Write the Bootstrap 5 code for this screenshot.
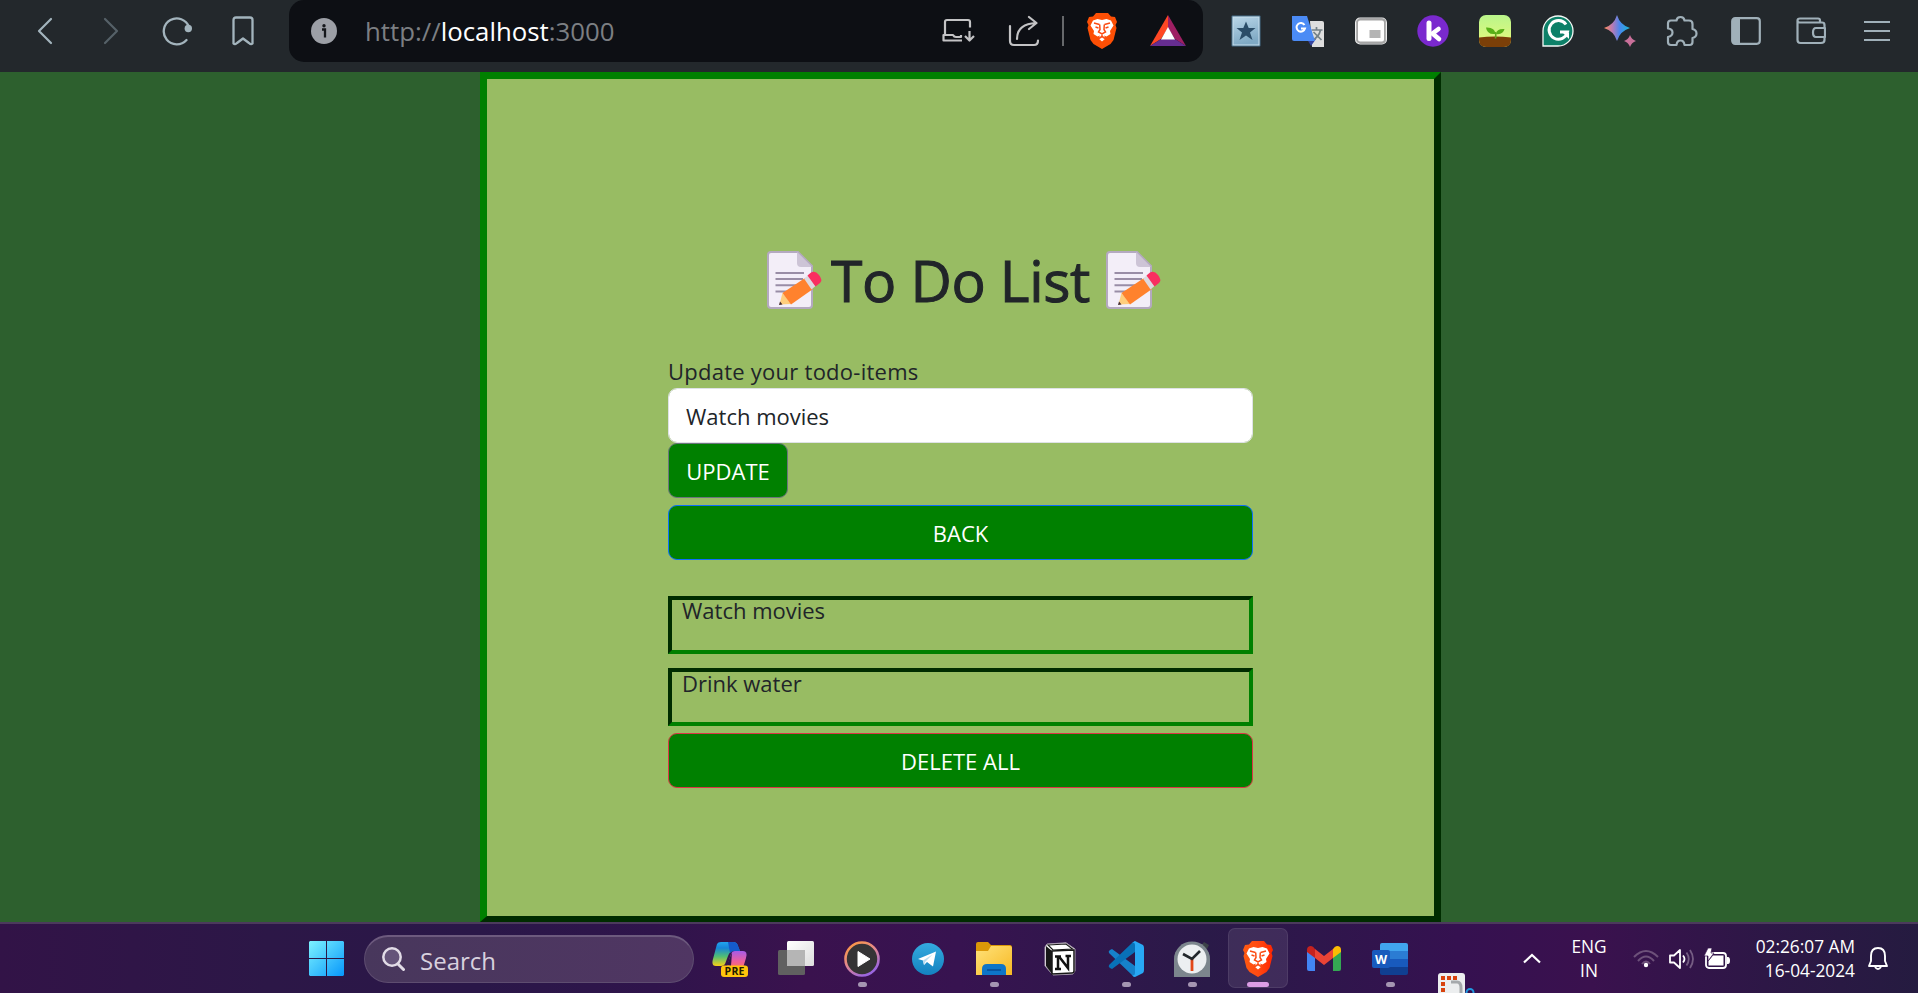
<!DOCTYPE html>
<html lang="en">
<head>
<meta charset="utf-8">
<title>To Do List</title>
<link href="https://cdn.jsdelivr.net/npm/bootstrap@5.3.0/dist/css/bootstrap.min.css" rel="stylesheet">
<script src="https://cdn.jsdelivr.net/npm/bootstrap@5.3.0/dist/js/bootstrap.bundle.min.js"></script>
<style>
  body { height: 993px; font-family: "Open Sans", "Noto Sans", sans-serif; font-size: 22px; background: #2d602e; color: #212529; }
  svg { display: block; flex: none; }
  .toolbar { height: 72px; background: #23282c; padding-left: 12px; padding-right: 8px; }
  .toolbar .slot { width: 66px; height: 62px; }
  .toolbar .ext { width: 62.3px; }
  .toolbar .tool { width: 65.3px; }
  .address { width: 914px; height: 62px; margin-left: 13px; margin-right: 12px; padding-left: 22px; padding-right: 2px; background: #0d0f14; border-radius: 15px; }
  .url { margin-left: 28px; font-size: 25.800px; color: #7c7f83; }
  .url b { color: #fff; font-weight: 400; }
  .rule { width: 2px; height: 30px; margin: 0 5px; background: #66686b; }
  .page { height: 850px; padding-left: 3px; }
  .todo { width: 961px; height: 850px; background: #98bc63; border: 7px outset green; border-bottom-width: 6px; }
  .todo-body { width: 585px; padding-top: 172px; }
  .title { height: 58px; margin: 0 0 44px 8px; font-size: 57px; font-weight: 500; line-height: 58px; white-space: nowrap; }
  .title-text { padding: 0 16px 0 8px; letter-spacing: -.35px; -webkit-text-stroke: 1px #212529; }
  .label-line { line-height: 36px; height: 35px; letter-spacing: .25px; }
  .todo .form-control, .todo .btn { font-size: 22px; height: 55px; border-radius: 9px; padding: 1px 17px 0; line-height: 53px; }
  .todo .btn { background: green; color: #fff; }
  .todo .update { width: 120px; padding-left: 0; padding-right: 0; }
  .back { margin-top: 7px; margin-bottom: 36px; }
  .entry { height: 58px; border: 4px inset green; padding-left: 10px; line-height: 21px; }
  .entry.second { margin-top: 14px; line-height: 23px; }
  .delete { margin-top: 7px; }
  .taskbar { height: 71px; border-top: 2px solid #4b3a5c; color: #f4f0f7;
    background: linear-gradient(90deg,#321347 0,#2c1747 14%,#2a1748 25%,#2f144b 34%,#3a124e 42%,#371350 50%,#2a1a48 63%,#351150 76%,#3a114e 83%,#2d1746 92%,#251b40 100%); }
  .start { width: 35px; margin-left: 309px; }
  .search { width: 330px; height: 48px; margin: 0 3px 0 20px; padding-left: 17px; border-radius: 24px; border: 1px solid #5e4d70; border-top: 2px solid #6d5a7e; background: linear-gradient(90deg,#48375c,#503663); font-size: 24px; color: #d8d1de; }
  .search-text { margin-left: 15px; padding-top: 3px; }
  .app { width: 66px; height: 69px; position: relative; }
  .app.start { width: 35px; }
  .app.live::after { content: ""; position: absolute; left: 29px; bottom: 6px; width: 9px; height: 5px; border-radius: 3px; background: #a596b2; }
  .app.active::before { content: ""; position: absolute; inset: 4px 3px 5px; border-radius: 7px; background: rgba(255,255,255,.09); border: 1px solid rgba(255,255,255,.08); }
  .app.active::after { left: 22px; width: 22px; background: #dc9de6; }
  .tray { font-size: 17.300px; line-height: 23.500px; white-space: nowrap; color: #fff; }
  .snip { margin-left: 15px; }
  .up { margin-left: 47px; }
  .lang { width: 48px; margin-left: 24px; }
  .wifi { margin-left: 20px; }
  .sound { margin-left: 10px; }
  .battery { margin-left: 9px; }
  .clock { width: 111px; margin-left: 14px; }
  .bell { margin-left: 13px; }
</style>
</head>
<body class="d-flex flex-column overflow-hidden">
<svg width="0" height="0" class="position-absolute">
  <defs>
    <linearGradient id="flame"><stop stop-color="#ff5a10"/><stop offset=".5" stop-color="#ff4a12"/><stop offset="1" stop-color="#ff2500"/></linearGradient>
    <linearGradient id="win" x2="1" y2="1"><stop stop-color="#7df3ff"/><stop offset="1" stop-color="#0797fb"/></linearGradient>
    <linearGradient id="rainbow" x2="0" y2="1"><stop stop-color="#22a5ee"/><stop offset=".25" stop-color="#1685d8"/><stop offset=".6" stop-color="#50bd75"/><stop offset="1" stop-color="#f8cf17"/></linearGradient>
    <linearGradient id="pink" x2="0" y2="1"><stop stop-color="#a65be8"/><stop offset=".5" stop-color="#ee5f9b"/><stop offset="1" stop-color="#ff7c45"/></linearGradient>
    <linearGradient id="gem" x2="1"><stop stop-color="#ff8a56"/><stop offset=".32" stop-color="#b87bb5"/><stop offset=".6" stop-color="#4b86ed"/><stop offset="1" stop-color="#17b8d6"/></linearGradient>
    <linearGradient id="folder" x2="1" y2="1"><stop stop-color="#ffe27a"/><stop offset="1" stop-color="#f7b924"/></linearGradient>
    <linearGradient id="ring" x2=".6" y2="1"><stop stop-color="#ff9a35"/><stop offset=".5" stop-color="#e58a8a"/><stop offset="1" stop-color="#9a66df"/></linearGradient>
    <linearGradient id="sky" x2="0" y2="1"><stop stop-color="#b9f58a"/><stop offset="1" stop-color="#eaf97b"/></linearGradient>
    <linearGradient id="steel" x2=".3" y2="1"><stop stop-color="#b9d6e8"/><stop offset="1" stop-color="#7fa9c4"/></linearGradient>
    <linearGradient id="tg" x2="0" y2="1"><stop stop-color="#34aadf"/><stop offset="1" stop-color="#1482c0"/></linearGradient>
    <linearGradient id="paperw" x2="1" y2="1"><stop stop-color="#fff"/><stop offset="1" stop-color="#ddd"/></linearGradient>
    <g id="lion-head">
      <path d="M9 0H21L24 3.500 28 4 30 9 28.500 12 29.500 15 26.500 27 23.500 31 15 36 6.500 31 3.500 27 .5 15 1.500 12 0 9 2 4 6 3.500Z"/>
    </g>
    <g id="lion-face">
      <path d="M10.500 6 15 7 19.500 6 24 7.500 26.500 12.500 23 18 23.500 21 19.500 23.500 17 22.500 18.500 25.500 15 28.500 11.500 25.500 13 22.500 10.500 23.500 6.500 21 7 18 3.500 12.500 6 7.500Z" fill="#fff"/>
      <path d="M7 10 12.500 11.500 M23 10 17.500 11.500M12.700 11.500 13 16.500 11.500 19 15 21 18.500 19 17 16.500 17.300 11.500M8.500 14 11.500 15M21.500 14 18.500 15M15 21V23.500M15 23.500 11 26M15 23.500 19 26" fill="none" stroke="#fb4b12" stroke-width="1.500"/>
    </g>
    <symbol id="memo" viewBox="0 0 56 58">
      <path d="M4 1H31L45 15V54Q45 57 42 57H4Q1 57 1 54V4Q1 1 4 1Z" fill="#f3eef8" stroke="#b4a9c0" stroke-width="2"/>
      <path d="M30 1 45 16H34Q30 16 30 12Z" fill="#cdc4d6"/>
      <path d="M8.500 22H37M8.500 28H36M8.500 34.300H30M8.500 40.500H20" stroke="#998da6" stroke-width="2"/>
      <path d="M12.500 53.500 15.500 42 24 53Z" fill="#ffce7c"/>
      <path d="M12 54 13 50.500 15.500 53.500Z" fill="#402a32"/>
      <path d="M15.500 42 38 27 46 38 24 53.500Z" fill="#ff822d"/>
      <path d="M37 27.500 41 24.500 48.500 35 44.500 38.500Z" fill="#ddd9df"/>
      <path d="M40.500 24.500 44 21.500Q48 19 52 24 56 29 53 32L48.500 35.500Z" fill="#f92f60"/>
    </symbol>
  </defs>
</svg>

<nav class="toolbar d-flex align-items-start flex-shrink-0">
  <div class="slot d-flex align-items-center justify-content-center"><svg width="16" height="28" fill="none" stroke="#a3b4bd" stroke-width="2.200" stroke-linecap="round" stroke-linejoin="round"><path d="M14 2 2 14 14 26"/></svg></div>
  <div class="slot d-flex align-items-center justify-content-center"><svg width="16" height="28" fill="none" stroke="#566168" stroke-width="2.200" stroke-linecap="round" stroke-linejoin="round"><path d="M2 2 14 14 2 26"/></svg></div>
  <div class="slot d-flex align-items-center justify-content-center"><svg width="30" height="30" fill="none" stroke="#a3b4bd" stroke-width="2.300" stroke-linecap="round"><path d="M24.500 24A13 13 0 1 1 27 11"/><circle cx="26.300" cy="12.500" r="3.700" fill="#a3b4bd" stroke="none"/></svg></div>
  <div class="slot d-flex align-items-center justify-content-center"><svg width="22" height="30" fill="none" stroke="#a3b4bd" stroke-width="2.300" stroke-linejoin="round"><path d="M1.500 4Q1.500 1.500 4 1.500H18Q20.500 1.500 20.500 4V27.500Q19 29 17 27L11 22.500 5 27Q3 29 1.500 27.500Z"/></svg></div>

  <div class="address d-flex align-items-center">
    <svg width="26" height="26"><circle cx="13" cy="13" r="13" fill="#9c9fa6"/><circle cx="13" cy="7.700" r="1.700" fill="#15171b"/><path d="M11 11.500H14V19.500" fill="none" stroke="#15171b" stroke-width="2.300"/></svg>
    <span class="url">http://<b>localhost</b>:3000</span>
    <div class="slot ms-auto d-flex align-items-center justify-content-center"><svg width="33" height="26" fill="none" stroke="#c3c3c5" stroke-width="2.200" stroke-linejoin="round"><path d="M28 9.500V4Q28 2 26 2H5Q3 2 3 4V17M20 22.500H1.500V17H11Q12 19 14 19H19V17M27.500 13V22M23 18 27.500 22.500 32 18"/></svg></div>
    <div class="slot d-flex align-items-center justify-content-center"><svg width="32" height="32" fill="none" stroke="#c3c3c5" stroke-width="2.200" stroke-linecap="round" stroke-linejoin="round"><path d="M2 11V26Q2 30 6 30H26Q30 30 30 25.500M9 24Q9 9 28 8M21 2 28.500 8 21 14"/></svg></div>
    <div class="rule"></div>
    <div class="slot d-flex align-items-center justify-content-center"><svg width="30" height="36"><use href="#lion-head" fill="#fd4f05"/><use href="#lion-face"/></svg></div>
    <div class="slot d-flex align-items-center justify-content-center"><svg width="36" height="32"><path d="M18 0 0 31 11 24 18 13Z" fill="#ff4724"/><path d="M18 0 36 31 25 24 18 13Z" fill="#9e1f63"/><path d="M0 31H36L25 24H11Z" fill="#662d91"/><path d="M18 12 25 24.500H11Z" fill="#fff"/></svg></div>
  </div>

  <div class="slot ext d-flex align-items-center justify-content-center"><svg width="30" height="32"><rect x=".5" y=".5" width="29" height="31" rx="1" fill="#476f8a"/><rect x="2" y="2" width="26" height="28" fill="url(#steel)" stroke="#c9dfec"/><path d="M15 6.500 17.700 13H24.500L19 17.500 21.500 25 15 20.500 8.500 25 11 17.500 5.500 13H12.300Z" fill="#2b4d68"/></svg></div>
  <div class="slot ext d-flex align-items-center justify-content-center"><svg width="32" height="32"><path d="M18 6H30Q32 6 32 8V32H20Z" fill="#dedede"/><path d="M15 24H24L19 31Z" fill="#3544a0"/><path d="M19.500 15H30.500M24.500 12V15M28.500 15Q27 22 20.500 25M21.500 17 29.500 25" fill="none" stroke="#748187" stroke-width="1.700"/><path d="M0 1H15L23 26H2Q0 26 0 24Z" fill="#4b8bf5"/><path d="M12.500 10A4.300 4.300 0 1 0 13 13.500H9" fill="none" stroke="#fff" stroke-width="2"/></svg></div>
  <div class="slot ext d-flex align-items-center justify-content-center"><svg width="32" height="28"><rect x="2" y="2.500" width="28" height="23" rx="3" fill="#fff" stroke="#a5a5a5" stroke-width="2"/><rect x=".6" y="1" width="30.800" height="26" rx="4.500" fill="none" stroke="#eee" stroke-width="1.200"/><rect x="14.500" y="13" width="11" height="8" fill="#b4b4b4"/></svg></div>
  <div class="slot ext d-flex align-items-center justify-content-center"><svg width="32" height="32"><circle cx="16" cy="16" r="15.700" fill="#7a29ce"/><path d="M12 8V23.500" fill="none" stroke="#fff" stroke-width="5" stroke-linecap="round"/><path d="M21.500 14 15.500 18.500 22 24" fill="none" stroke="#fff" stroke-width="4.600" stroke-linecap="round" stroke-linejoin="round"/></svg></div>
  <div class="slot ext d-flex align-items-center justify-content-center"><svg width="32" height="32"><rect width="32" height="32" rx="7" fill="url(#sky)"/><path d="M0 22.500Q16 20.500 32 22.500V25Q32 32 25 32H7Q0 32 0 25Z" fill="#7b3f08"/><path d="M16.500 23.500Q17 19 16.500 17" fill="none" stroke="#62a81e" stroke-width="1.600"/><path d="M7 12.500Q16 12 16.500 19 8 20 7 12.500ZM25.500 14Q17.500 13.500 17 19 24 20 25.500 14Z" fill="#58b017"/></svg></div>
  <div class="slot ext d-flex align-items-center justify-content-center"><svg width="32" height="32"><path d="M1 31V16A15 15 0 1 1 16 31Z" fill="#0d8068" stroke="#f4f8f6" stroke-width="1.300"/><path d="M24 9.500A9.300 9.300 0 1 0 25.500 17H18" fill="none" stroke="#fff" stroke-width="3"/><path d="M21 18H27V24Z" fill="#fff"/></svg></div>
  <div class="slot ext d-flex align-items-center justify-content-center"><svg width="32" height="32"><path d="M13 0Q16 10 26 13 16 16 13 26 10 16 0 13 10 10 13 0Z" fill="url(#gem)"/><path d="M26 20Q27.500 24.500 32 26 27.500 27.500 26 32 24.500 27.500 20 26 24.500 24.500 26 20Z" fill="#c9709a"/></svg></div>
  <div class="slot ext d-flex align-items-center justify-content-center"><svg width="32" height="32" fill="none" stroke="#a0b0b9" stroke-width="2.200" stroke-linejoin="round"><path d="M5 5.500H10.500Q11 2 14.500 2T18.500 5.500H23Q26.500 5.500 26.500 9V14Q30.500 15 30.500 18.500T26.500 23V27Q26.500 30 23.500 30H18.500Q18 25.500 14.500 25.500T10.500 30H5Q2 30 2 27V22Q6.500 21 6.500 17.500T2 13.500V8.500Q2 5.500 5 5.500Z"/></svg></div>
  <div class="slot tool d-flex align-items-center justify-content-center"><svg width="30" height="28"><rect x="1.200" y="1.200" width="27.600" height="25.600" rx="3" fill="none" stroke="#a0b0b9" stroke-width="2.200"/><path d="M2 2H9V26H2Z" fill="#a0b0b9"/></svg></div>
  <div class="slot tool d-flex align-items-center justify-content-center"><svg width="30" height="28" fill="none" stroke="#a0b0b9" stroke-width="2.200" stroke-linejoin="round"><path d="M28.500 11V8Q28.500 5.500 26 5.500H4Q1.500 5.500 1.500 3.500T4 1.500H22Q24 1.500 24 3.500V5.500M1.500 4V23Q1.500 26 4.500 26H25Q28.500 26 28.500 23V20M29 11H20Q17 11 17 15.500T20 20H29Z"/></svg></div>
  <div class="slot tool d-flex align-items-center justify-content-center"><svg width="26" height="22" stroke="#a0b0b9" stroke-width="2"><path d="M0 2H26M0 11H26M0 20H26"/></svg></div>
</nav>

<main class="page d-flex justify-content-center flex-shrink-0">
  <section class="todo d-flex justify-content-center">
    <div class="todo-body">
      <h1 class="title d-flex justify-content-center"><svg width="56" height="58"><use href="#memo"/></svg><span class="title-text">To Do List</span><svg width="56" height="58"><use href="#memo"/></svg></h1>
      <div class="label-line">Update your todo-items</div>
      <input class="form-control" type="text" value="Watch movies">
      <button class="btn btn-secondary d-block update">UPDATE</button>
      <button class="btn btn-primary d-block w-100 back">BACK</button>
      <div class="entry">Watch movies</div>
      <div class="entry second">Drink water</div>
      <button class="btn btn-danger d-block w-100 delete">DELETE ALL</button>
    </div>
  </section>
</main>

<footer class="taskbar d-flex flex-shrink-0 align-items-start">
  <div class="app start d-flex align-items-center"><svg width="35" height="35"><path d="M1 0H17V17H0V1ZM18 0H34L35 1V17H18ZM0 18H17V35H1L0 34ZM18 18H35V34L34 35H18Z" fill="url(#win)"/></svg></div>
  <div class="search d-flex align-items-center align-self-center"><svg width="23" height="24" fill="none" stroke="#e2dce7" stroke-linecap="round"><circle cx="10" cy="10" r="8.700" stroke-width="2.500" fill="#65547a"/><path d="M16 17 21.500 22.500" stroke-width="3"/></svg><span class="search-text">Search</span></div>

  <div class="app d-flex align-items-center justify-content-center"><svg width="36" height="36"><path d="M5 3Q6 1 9 1H21Q25 1 26 5L28 10H21Q18 10 16 15L13 23Q12 25 9 25H4Q-1 25 1 18Z" fill="url(#rainbow)"/><path d="M16 1H21Q25 1 26 5L28 10H22Q20 10 18 12Z" fill="#155acb"/><path d="M22 10H31Q36 10 34 17L31 27Q30 31 25 31H9Q14 29 15 26L19 13Q20 10 23 10Z" fill="url(#pink)"/><path d="M20 11 15 24 19 25Z" fill="#2e164a"/><rect x="9" y="24.500" width="27" height="11.500" rx="3" fill="#ffc40c"/><text x="22.500" y="34" text-anchor="middle" font-size="10.500" font-weight="700" textLength="20" fill="#241900">PRE</text></svg></div>
  <div class="app d-flex align-items-center justify-content-center"><svg width="36" height="35"><rect y="9" width="27" height="25" rx="1.500" fill="#606060"/><rect x="9" width="27" height="25" rx="1.500" fill="url(#paperw)"/><path d="M9 9H27V25H9Z" fill="#b5b5b5"/></svg></div>
  <div class="app live d-flex align-items-center justify-content-center"><svg width="36" height="36"><circle cx="18" cy="18" r="16.500" fill="#353435" stroke="url(#ring)" stroke-width="2.600"/><path d="M14 10.500 26 18 14 25.500Z" fill="#fff" stroke="#fff" stroke-linejoin="round"/></svg></div>
  <div class="app d-flex align-items-center justify-content-center"><svg width="32" height="32"><circle cx="16" cy="16" r="16" fill="url(#tg)"/><path d="M6 16 24 8.500 21 23.500 15 19 12 22 11 17.500Z" fill="#fff"/><path d="M11 17.500 20.500 11.500 13.500 18.500 12 22Z" fill="#b9dcf0"/></svg></div>
  <div class="app live d-flex align-items-center justify-content-center"><svg width="36" height="34"><path d="M0 2Q0 0 2 0H12L15 3H34Q36 3 36 6V20H0Z" fill="#dc9808"/><path d="M0 9H12L15 4H34Q36 4 36 6V33H0Z" fill="url(#folder)"/><path d="M6 33V27Q6 22 11 22H25Q30 22 30 27V33Z" fill="#0e75c8"/><path d="M11 28H25" stroke="#064b94" stroke-width="1.500"/></svg></div>
  <div class="app d-flex align-items-center justify-content-center"><svg width="32" height="34"><path d="M3 2 22 .8 31 7V29L29 32 9 33 1 24V5Z" fill="#fff" stroke="#a99cae"/><path d="M2 4V24L8 32V9Z" fill="#171717"/><path d="M4 3 22 2 28.500 7 9 8Z" fill="#fff" stroke="#171717" stroke-width="1.200"/><path d="M8 9 30 8V29Q30 31 28 31L8 32Z" fill="#fff" stroke="#171717" stroke-width="1.500"/><path d="M12 14.500H15L24 26V13.500M14 14V27M11 14.500H17M21.500 14H27M11 27H17" fill="none" stroke="#111" stroke-width="2.500"/></svg></div>
  <div class="app live d-flex align-items-center justify-content-center"><svg width="36" height="36"><path d="M1 12Q0 10 2 9L4 8 27 25V36Q26 36 24 34Z" fill="#1681ca"/><path d="M1 24Q0 26 2 27L4 28 27 11V0Q25 1 24 2Z" fill="#0871b8"/><path d="M27 0 35 4Q36 5 36 7V29Q36 31 35 32L27 36Q25 36 24 34 27 35 27 32V4Q27 1 24 2Z" fill="#28a8f4"/></svg></div>
  <div class="app live d-flex align-items-center justify-content-center"><svg width="36" height="36"><path d="M27 5 30 1 35 4 33 8Z" fill="#3c4248"/><path d="M0 36V18A18 17.500 0 1 1 36 18V36Z" fill="#7c868d"/><circle cx="18" cy="18" r="14.500" fill="#eceff1"/><path d="M18 18V30" stroke="#e34818" stroke-width="2.800"/><path d="M9 13 18 18 26 10" fill="none" stroke="#22272b" stroke-width="2.600"/></svg></div>
  <div class="app live active d-flex align-items-center justify-content-center"><svg width="30" height="36" class="position-relative"><use href="#lion-head" fill="url(#flame)"/><use href="#lion-face"/></svg></div>
  <div class="app d-flex align-items-center justify-content-center"><svg width="34" height="25"><path d="M0 5V23Q0 25 2 25H8V10Z" fill="#4285f4"/><path d="M34 5V23Q34 25 32 25H26V10Z" fill="#34a853"/><path d="M8 3 17 10 26 3V12L17 19 8 12Z" fill="#ea4335"/><path d="M0 4Q0 0 4 0 6 0 8 3V12L0 6Z" fill="#c5221f"/><path d="M34 4Q34 0 30 0 28 0 26 3V12L34 6Z" fill="#fbbc04"/></svg></div>
  <div class="app live d-flex align-items-center justify-content-center"><svg width="36" height="32"><path d="M8 8V2Q8 0 10 0H34Q36 0 36 2V8Z" fill="#41a5ee"/><path d="M8 8H36V16H8Z" fill="#2b7cd3"/><path d="M8 16H36V24H8Z" fill="#185abd"/><path d="M8 24H36V30Q36 32 34 32H10Q8 32 8 30Z" fill="#103f91"/><rect y="7" width="18" height="18" rx="2" fill="#185abd"/><text x="9" y="20.500" text-anchor="middle" font-size="12.500" font-weight="700" fill="#fff">W</text></svg></div>

  <div class="snip align-self-end"><svg width="38" height="20"><path d="M0 20V3Q0 0 3 0H24Q27 0 27 3V20Z" fill="#eceeef"/><path d="M3 5H19M5 9V20" stroke="#d8430d" stroke-width="4" stroke-dasharray="4 2"/><path d="M13 9H19Q23 9 23 15V20" fill="none" stroke="#a5a9ac" stroke-width="3"/><circle cx="32" cy="19.500" r="3.500" fill="none" stroke="#2099e0" stroke-width="2"/></svg></div>
  <svg class="up align-self-center" width="18" height="11" fill="none" stroke="#fff" stroke-width="2.200"><path d="M1 9.500 9 2 17 9.500"/></svg>
  <div class="tray lang text-center align-self-center">ENG<br>IN</div>
  <svg class="wifi align-self-center" width="26" height="20" fill="none" stroke="#6d517a" stroke-width="2"><path d="M1 8Q13-4 25 8M5 12Q13 3 21 12M9 15Q13 10 17 15"/><circle cx="13" cy="16" r="2.200" fill="#fff" stroke="none"/></svg>
  <svg class="sound align-self-center" width="26" height="22" fill="none" stroke="#fff" stroke-width="1.800" stroke-linejoin="round"><path d="M1 7.500H5L11 2V20L5 14.500H1ZM14 7.500Q17 11 14 14.500"/><path d="M17.500 4.500Q22 11 17.500 17.500M21 2Q27 11 21 20" stroke="#755d83"/></svg>
  <svg class="battery align-self-center" width="26" height="22"><rect x="2" y="5" width="20" height="15" rx="3" fill="none" stroke="#fff" stroke-width="1.800"/><path d="M4.500 17.500V13L9 7.500H19.500V17.500ZM23 9H24Q26 9 26 12.500T24 16H23Z" fill="#fff"/><path d="M4 0H8L7 5H10L4 13V8H0Z" fill="#fff" stroke="#35134c" stroke-width=".7"/></svg>
  <div class="tray clock text-end align-self-center"><div>02:26:07 AM</div><div>16-04-2024</div></div>
  <svg class="bell align-self-center" width="20" height="24" fill="none" stroke="#fff" stroke-width="1.900" stroke-linejoin="round"><path d="M1 19 3 14V9Q3 1 10 1T17 9V14L19 19ZM7 20Q10 24 13 20"/></svg>
</footer>
</body>
</html>
